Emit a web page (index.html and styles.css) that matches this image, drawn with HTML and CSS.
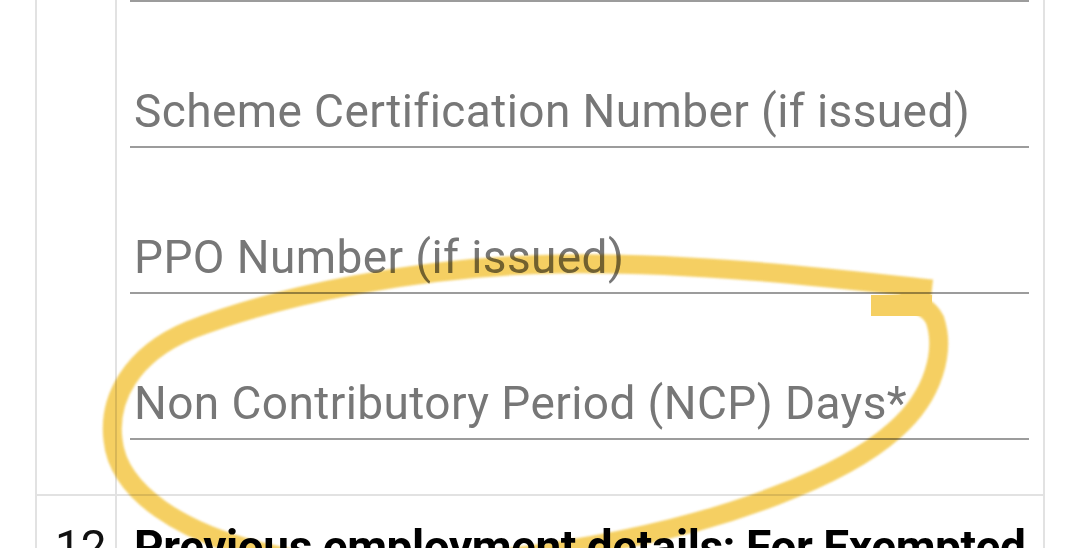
FILE: index.html
```html
<!DOCTYPE html>
<html>
<head lang="en">
    <meta charset="UTF-8">
    <title>Form 11</title>
    <link rel="stylesheet" href="styles.css">
</head>
<body>
<div class="sheet">
    <div class="row">
        <div class="num"></div>
        <div class="fields">
            <div class="field tail"></div>
            <div class="field"><label>Scheme Certification Number (if issued)</label></div>
            <div class="field"><label>PPO Number (if issued)</label></div>
            <div class="field"><label>Non Contributory Period (NCP) Days*</label></div>
        </div>
    </div>
    <div class="row">
        <div class="num">12</div>
        <div class="heading">Previous employment details: For Exempted establishments</div>
    </div>
</div>

<!-- marker ring drawn over the form -->
<svg class="marker" viewBox="0 0 1080 548" width="1080" height="548">
    <path d="M 932 289 C 850 280, 700 262, 560 264 C 420 266, 280 295, 190 330 C 130 355, 108 400, 113 440 C 118 490, 178 535, 280 556 C 380 575, 520 560, 620 540 C 720 520, 840 480, 895 430 C 935 395, 945 350, 935 320 C 928 306, 915 302, 900 302"/>
    <rect x="871" y="295" width="61" height="21"/>
</svg>
</body>
</html>
```

FILE: styles.css
```css
* {
    margin: 0;
    padding: 0;
    box-sizing: border-box;
}

body {
    font-family: Roboto, "Liberation Sans", sans-serif;
    background: #fff;
    overflow: hidden;
    height: 548px;
}

.sheet {
    margin-left: 35px;
    width: 1010px;
    border-left: 2px solid #e2e2e2;
    border-right: 2px solid #e2e2e2;
}

.row {
    display: grid;
    grid-template-columns: 80px 1fr;
}

.row + .row {
    border-top: 2px solid #e2e2e2;
}

.num {
    border-right: 2px solid #e2e2e2;
    font-size: 46px;
    line-height: 54px;
    padding: 24px 0 0 18px;
    color: #111;
}

.fields {
    padding: 0 14px 54px 13px;
}

.field {
    height: 146px;
    border-bottom: 2px solid #9c9c9c;
    display: flex;
    align-items: flex-end;
    padding: 0 0 8px 4px;
}

.field.tail {
    height: 2px;
    padding: 0;
}

.field label {
    font-size: 46px;
    line-height: 54px;
    letter-spacing: 0.4px;
    color: #777;
    white-space: nowrap;
}

.heading {
    font-size: 46px;
    line-height: 54px;
    letter-spacing: -0.45px;
    font-weight: bold;
    color: #000;
    padding: 24px 0 0 17px;
}

.marker {
    position: absolute;
    left: 0;
    top: 0;
    pointer-events: none;
    mix-blend-mode: multiply;
    opacity: 0.78;
}

.marker path {
    fill: none;
    stroke: #f2c236;
    stroke-width: 19;
    filter: blur(0.8px);
}

.marker rect {
    fill: #f2c236;
    filter: blur(0.6px);
}
```
